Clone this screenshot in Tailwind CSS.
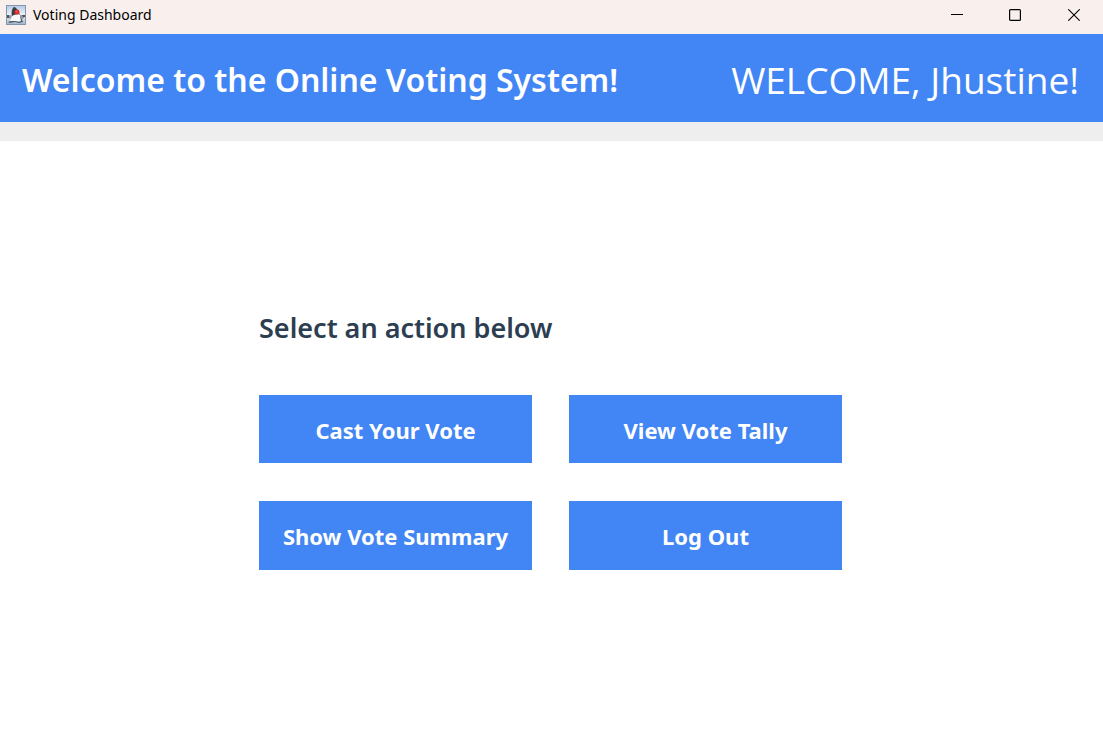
<!DOCTYPE html>
<html lang="en">
<head>
<meta charset="utf-8">
<meta name="viewport" content="width=device-width, initial-scale=1">
<title>Voting Dashboard</title>
<script src="https://cdn.jsdelivr.net/npm/@tailwindcss/browser@4"></script>
</head>
<body class="flex min-h-screen flex-col bg-white font-['Segoe_UI','Noto_Sans',sans-serif]">
  <div class="flex h-[34px] items-start justify-between bg-[#f9f0ee]">
    <div class="flex h-[30px] items-center gap-[7px] pl-1.5">
      <svg class="size-5" viewBox="0 0 20 20" aria-hidden="true">
        <defs>
          <linearGradient id="tile" x1="0" y1="0" x2="0" y2="1">
            <stop offset="0" stop-color="#b4c9e2"/>
            <stop offset=".5" stop-color="#eef3f9"/>
            <stop offset="1" stop-color="#9fb5cf"/>
          </linearGradient>
        </defs>
        <rect x=".5" y=".5" width="19" height="19" fill="url(#tile)" stroke="#8197b0"/>
        <path d="M1 11 4 10 7 11 5 14 2 13ZM14 10l4 0 1 1-2 3-3-1Z" fill="#9a9da2"/>
        <path d="M1 10h2v3H1ZM16 10h3v2h-2Z" fill="#4d5157"/>
        <path d="M7 9 14 9 15 16 10 16 4 18 5 13Z" fill="#f7f8fa"/>
        <path d="M8 2c2 0 4 3 6 8l-2-1-4 1-2 1C5 8 6 3 8 2Z" fill="#3a3e45"/>
        <path d="M14 10 17 17 13 18 9 17 4 18 2 17 5 16 9 16 13 17 15 16Z" fill="#565b62"/>
        <circle cx="11" cy="7" r="2.500" fill="#e0252b"/>
        <circle cx="10.500" cy="6.500" r="1" fill="#ff5a50"/>
      </svg>
      <span class="text-[14px] leading-5 text-black">Voting Dashboard</span>
    </div>
    <div class="flex h-[30px]">
      <button type="button" aria-label="Minimize" class="flex w-[58px] items-center justify-center">
        <svg class="size-3" viewBox="0 0 12 12" fill="none" stroke="#000"><path d="M0 5.500h12"/></svg>
      </button>
      <button type="button" aria-label="Maximize" class="flex w-[58px] items-center justify-center">
        <svg class="size-3" viewBox="0 0 12 12" fill="none" stroke="#000" stroke-width="1.200"><rect x=".6" y=".6" width="10.800" height="10.800" rx="1"/></svg>
      </button>
      <button type="button" aria-label="Close" class="flex w-[59px] items-center justify-center">
        <svg class="size-3" viewBox="0 0 12 12" fill="none" stroke="#000" stroke-width="1.100"><path d="M.3.3l11.400 11.400M11.700.3.3 11.700"/></svg>
      </button>
    </div>
  </div>

  <header class="flex h-[88px] items-center justify-between bg-[#4285f4] pt-1 pr-6 pl-[22px] text-white">
    <h1 class="text-[32px] leading-10 font-semibold">Welcome to the Online Voting System!</h1>
    <p class="font-['Segoe_UI','Open_Sans',sans-serif] text-[37px] leading-10">WELCOME, Jhustine!</p>
  </header>
  <div class="h-[19px] bg-[#eeeeee]"></div>

  <main class="flex grow items-center justify-center pr-0.5">
    <section>
      <h2 class="mb-11 text-[27px] leading-[46px] font-semibold text-[#2c3e50]">Select an action below</h2>
      <div class="grid grid-cols-[273px_273px] gap-x-[37px] gap-y-[38px] text-[22px] font-bold text-white">
        <button type="button" class="h-[68px] bg-[#4285f4] pt-0.5">Cast Your Vote</button>
        <button type="button" class="h-[68px] bg-[#4285f4] pt-0.5">View Vote Tally</button>
        <button type="button" class="h-[69px] bg-[#4285f4] pt-0.5">Show Vote Summary</button>
        <button type="button" class="h-[69px] bg-[#4285f4] pt-0.5">Log Out</button>
      </div>
    </section>
  </main>
</body>
</html>
